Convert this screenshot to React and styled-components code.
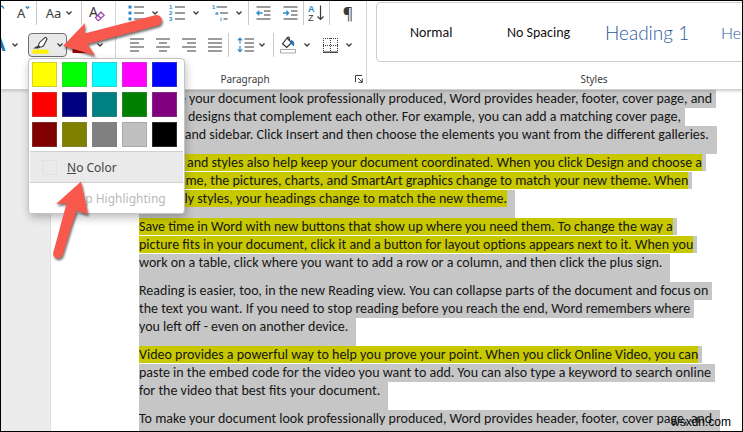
import React, { useState } from "react";
import styled, { createGlobalStyle } from "styled-components";

const GlobalStyle = createGlobalStyle`
  * {
    box-sizing: border-box;
  }
  body {
    margin: 0;
    background: #fff;
    font-family: "Noto Sans", sans-serif;
  }
  button {
    font: inherit;
    color: inherit;
    border: 0;
    padding: 0;
    background: none;
    cursor: pointer;
  }
  svg {
    display: block;
    flex: none;
  }
`;

const Window = styled.div`
  position: relative;
  display: flex;
  flex-direction: column;
  height: 100vh;
  border: 1px solid #000;
  overflow: hidden;
  background: #fff;
`;

const Ribbon = styled.header`
  position: relative;
  z-index: 2;
  display: flex;
  flex: none;
  background: #fff;
  border-bottom: 1px solid #d0d0d0;
  box-shadow: 0 1px 3px rgba(0, 0, 0, 0.2);
`;

const Group = styled.section`
  display: flex;
  flex: none;
  flex-direction: column;
  padding-left: ${(props) => props.$inset || 0}px;
`;

const GroupDivider = styled.div`
  flex: none;
  width: 1px;
  margin-bottom: 5px;
  background: #d2d2d2;
`;

const ToolRow = styled.div`
  display: flex;
  height: 24px;
  margin-bottom: ${(props) => (props.$last ? 0 : 8)}px;
`;

const Tool = styled.button`
  display: flex;
  flex: none;
  align-items: center;
  justify-content: ${(props) => props.$align || "center"};
  gap: ${(props) => props.$gap || 8}px;
  width: ${(props) => props.$width}px;
`;

const Divider = styled.div`
  flex: none;
  width: 1px;
  background: #c9c9c9;
`;

const HighlightAnchor = styled.div`
  position: relative;
  margin: 0 5px 0 4px;
`;

const HighlightButton = styled.button`
  display: flex;
  align-items: center;
  justify-content: center;
  gap: 8px;
  width: 39px;
  height: 24px;
  border: 1px solid #6f6f6f;
  border-radius: 4px;
  background: #e9e9e9;
`;

const GroupFooter = styled.div`
  display: flex;
  align-items: center;
  justify-content: center;
  position: relative;
  height: 20px;
  margin-top: ${(props) => props.$top}px;
  font-size: 10px;
  color: #3b3b3b;
`;

const Launcher = styled.button`
  position: absolute;
  right: 3px;
`;

const StylesGroup = styled.section`
  flex: 1 0 444px;
  padding: 1px 0 0 9px;
`;

const Gallery = styled.div`
  display: flex;
  align-items: center;
  height: 60px;
  padding-left: 33px;
  border: 1px solid #cfcfcf;
  border-radius: 4px;
  overflow: hidden;
`;

const StyleItem = styled.button`
  flex: none;
  width: ${(props) => props.$width}px;
  text-align: left;
  white-space: nowrap;
  font-family: ${(props) => (props.$heading ? "Lato" : "Carlito, Lato")}, sans-serif;
  font-weight: ${(props) => (props.$heading ? 300 : 400)};
  font-size: ${(props) => props.$size}px;
  color: ${(props) => (props.$heading ? "#2f5a9e" : "#111")};
`;

const Menu = styled.div`
  position: absolute;
  top: 25px;
  left: 0;
  width: 157px;
  padding: 3px 1px 0;
  border: 1px solid #c4c4c4;
  border-radius: 4px;
  background: #fff;
  box-shadow: 1px 4px 9px rgba(0, 0, 0, 0.25);
`;

const Swatches = styled.div`
  display: grid;
  grid-template-columns: repeat(5, 25px);
  gap: 5px;
  padding: 0 2px 4px;
`;

const Swatch = styled.button`
  height: 25px;
  border: 1px solid rgba(128, 128, 128, 0.35);
  background: ${(props) => props.$color};
`;

const MenuItem = styled.button`
  display: flex;
  align-items: center;
  gap: 10px;
  width: 100%;
  height: 31px;
  padding-left: 12px;
  border-top: 1px solid #cfcfcf;
  background: ${(props) => (props.$hover ? "#eaeaea" : "#fff")};
  font-size: 12px;
  color: #444;

  &:disabled {
    color: #b9b9b9;
  }
`;

const MenuIcon = styled.span`
  width: 15px;
  height: 15px;
  border: 1px solid ${(props) => (props.$empty ? "transparent" : "#e2e2e2")};
`;

const Workspace = styled.main`
  display: flex;
  flex: 1;
  min-height: 0;
  background: #ececec;
`;

const Sheet = styled.article`
  flex: 1;
  margin-left: 49px;
  padding-left: 88px;
  border-left: 1px solid #e0e0e0;
  background: #fff;
  font-family: Carlito, Lato, sans-serif;
  font-size: 14px;
  line-height: 18px;
  color: #161616;
`;

const Paragraph = styled.p`
  margin: 0;
`;

const Line = styled.span`
  display: block;
  width: fit-content;
  padding-right: 4px;
  background: #c6c6c6;
  white-space: nowrap;

  &:last-child {
    padding-right: 8px;
    padding-bottom: 10px;
  }
`;

const Marked = styled.mark`
  display: block;
  height: 17px;
  margin-bottom: 1px;
  background: #c8c800;
  color: inherit;
`;

const Arrow = styled.svg`
  position: absolute;
  z-index: 3;
  left: ${(props) => props.$left}px;
  top: ${(props) => props.$top}px;
  pointer-events: none;
  filter: drop-shadow(1px 2px 1px rgba(0, 0, 0, 0.55));
`;

const Watermark = styled.div`
  position: absolute;
  right: 11px;
  bottom: 2px;
  font-family: "Liberation Sans", sans-serif;
  font-size: 12px;
  line-height: 14px;
  color: #000;
`;

const colors = [
  ["Yellow", "#ffff00"],
  ["Bright Green", "#00ff00"],
  ["Turquoise", "#00ffff"],
  ["Pink", "#ff00ff"],
  ["Blue", "#0000ff"],
  ["Red", "#ff0000"],
  ["Dark Blue", "#000080"],
  ["Teal", "#008080"],
  ["Green", "#008000"],
  ["Violet", "#800080"],
  ["Dark Red", "#800000"],
  ["Dark Yellow", "#808000"],
  ["Gray 50%", "#808080"],
  ["Gray 25%", "#c0c0c0"],
  ["Black", "#000000"],
];

// marked = how many lines at the start of the paragraph are highlighted
const paragraphs = [
  {
    marked: 0,
    lines: [
      "To make your document look professionally produced, Word provides header, footer, cover page, and",
      "text box designs that complement each other. For example, you can add a matching cover page,",
      "header, and sidebar. Click Insert and then choose the elements you want from the different galleries.",
    ],
  },
  {
    marked: 3,
    lines: [
      "Themes and styles also help keep your document coordinated. When you click Design and choose a",
      "new theme, the pictures, charts, and SmartArt graphics change to match your new theme. When",
      "you apply styles, your headings change to match the new theme.",
    ],
  },
  {
    marked: 2,
    lines: [
      "Save time in Word with new buttons that show up where you need them. To change the way a",
      "picture fits in your document, click it and a button for layout options appears next to it. When you",
      "work on a table, click where you want to add a row or a column, and then click the plus sign.",
    ],
  },
  {
    marked: 0,
    lines: [
      "Reading is easier, too, in the new Reading view. You can collapse parts of the document and focus on",
      "the text you want. If you need to stop reading before you reach the end, Word remembers where",
      "you left off - even on another device.",
    ],
  },
  {
    marked: 1,
    lines: [
      "Video provides a powerful way to help you prove your point. When you click Online Video, you can",
      "paste in the embed code for the video you want to add. You can also type a keyword to search online",
      "for the video that best fits your document.",
    ],
  },
  {
    marked: 0,
    lines: [
      "To make your document look professionally produced, Word provides header, footer, cover page, and",
    ],
  },
];

const INK = "#3a3a3a";
const BLUE = "#2b88c8";

const IconText = styled.text`
  font-family: ${(props) => (props.$ui ? "Noto Sans" : "Liberation Sans")}, sans-serif;
  font-size: ${(props) => props.$size || 6}px;
  font-weight: ${(props) => (props.$thin ? 400 : 700)};
  fill: ${(props) => props.$color || BLUE};
`;

const Chevron = () => (
  <svg width="6" height="4" viewBox="0 0 6 4" fill="none" stroke={INK} strokeWidth="1.3">
    <path d="M0.5 0.5 3 3 5.5 0.5" />
  </svg>
);

const ShrinkFontIcon = () => (
  <svg width="15" height="18" viewBox="0 0 15 18" fill="none">
    <IconText x="1" y="14" $size={13} $ui $thin $color={INK}>A</IconText>
    <path d="M9.8 2.5 11.5 4.3 13.2 2.5" stroke={BLUE} strokeWidth="1.3" />
  </svg>
);

const GrowFontIcon = () => (
  <svg width="6" height="16" viewBox="0 0 6 16" fill="none">
    <path d="M-1 2.5 1 1 3 3.5" stroke={BLUE} strokeWidth="1.3" />
  </svg>
);

const ClearFormatIcon = () => (
  <svg width="18" height="20" viewBox="0 0 18 20" fill="none">
    <IconText x="1" y="14" $size={14} $ui $thin $color={INK}>A</IconText>
    <path d="m7.5 14.5 5.5-5.3 3.2 3-5.5 5.3H9.8z" fill="#fff" stroke="#9b3fae" strokeWidth="1.2" />
    <path d="m9.8 12.3 3.2 3" stroke="#9b3fae" strokeWidth="1.2" />
  </svg>
);

const TextEffectsIcon = () => (
  <svg width="6" height="20" viewBox="0 0 6 20" fill="none">
    <IconText x="-8" y="16" $size={18} $ui $color="#2473b5">A</IconText>
  </svg>
);

const HighlighterIcon = () => (
  <svg width="17" height="19" viewBox="0 0 17 19" fill="none">
    <path d="M13.2 1.3 7.3 6.7l-.8 3.2 1.6 1.3 3.1-.9 3.8-7.2q-.2-1.6-1.8-1.8zM6.6 9.6 3 12h3.4l1.4-.9" fill="#fff" stroke={INK} strokeWidth="1.1" />
    <path d="M2.5 12h3.8l1.3-1-1.2-1.3z" fill={INK} />
    <path d="M0.5 13.7h16v4h-16z" fill="#fff000" />
  </svg>
);

const FontColorIcon = () => (
  <svg width="17" height="18" viewBox="0 0 17 18" fill="none">
    <IconText x="4" y="11" $size={13} $ui $thin $color={INK}>A</IconText>
    <path d="M0.5 13h16v4h-16z" fill="#c00000" />
  </svg>
);

const BulletsIcon = () => (
  <svg width="16" height="16" viewBox="0 0 16 16" fill="none">
    <path d="M0.5 0.5h3v3h-3zM0.5 6.5h3v3h-3zM0.5 12.5h3v3h-3z" fill={BLUE} />
    <path d="M6 2h10M6 8h10M6 14h10" stroke={INK} strokeWidth="1.2" />
  </svg>
);

const NumberingIcon = () => (
  <svg width="16" height="20" viewBox="0 0 16 20" fill="none">
    <IconText x="0" y="6">1</IconText>
    <IconText x="0" y="12">2</IconText>
    <IconText x="0" y="18">3</IconText>
    <path d="M6 4h10M6 10h10M6 16h10" stroke={INK} strokeWidth="1.2" />
  </svg>
);

const MultilevelIcon = () => (
  <svg width="16" height="20" viewBox="0 0 16 20" fill="none">
    <IconText x="0" y="6">1</IconText>
    <IconText x="3" y="12">a</IconText>
    <IconText x="8" y="18">i</IconText>
    <path d="M4.5 4H15M8 10h8M11.5 16h4" stroke={INK} strokeWidth="1.2" />
  </svg>
);

const IndentIcon = ({ outdent }) => (
  <svg width="15" height="14" viewBox="0 0 15 14" fill="none">
    <path d="M0.5 1h14M8 5h6.5M8 9h6.5M0.5 13h14" stroke={INK} strokeWidth="1.2" />
    <path d={outdent ? "M6.5 7H1M3.3 4.6 0.9 7l2.4 2.4" : "M0 7h5.5M3.3 4.6 5.7 7 3.3 9.4"} stroke={BLUE} strokeWidth="1.3" />
  </svg>
);

const SortIcon = () => (
  <svg width="17" height="20" viewBox="0 0 17 20" fill="none">
    <IconText x="0" y="9" $size={9}>A</IconText>
    <IconText x="0" y="18" $size={9} $thin $color={INK}>Z</IconText>
    <path d="M12.5 2.5v14M9.5 13.5l3 3 3-3" stroke={INK} strokeWidth="1.2" />
  </svg>
);

const alignLines = {
  left: "M0 1h14M0 5h9M0 9h14M0 13h9",
  center: "M0 1h14M3 5h8M0 9h14M3 13h8",
  right: "M0 1h14M5 5h9M0 9h14M5 13h9",
  justify: "M0 1h14M0 5h14M0 9h14M0 13h14",
};

const AlignIcon = ({ kind }) => (
  <svg width="14" height="14" viewBox="0 0 14 14" fill="none">
    <path d={alignLines[kind]} stroke={INK} strokeWidth="1.2" />
  </svg>
);

const SpacingIcon = () => (
  <svg width="17" height="16" viewBox="0 0 17 16" fill="none">
    <path d="M3 1v5.5M3 9v5.5M0.8 3.4 3 1.2l2.2 2.2M0.8 12.4 3 14.6l2.2-2.2" stroke={BLUE} strokeWidth="1.2" />
    <path d="M7.5 2H17M7.5 6H17M7.5 10H17M7.5 14H17" stroke={INK} strokeWidth="1.2" />
  </svg>
);

const ShadingIcon = () => (
  <svg width="16" height="18" viewBox="0 0 16 18" fill="none">
    <path d="M7 2 2.5 7.8l4.3 3.7 4.6-4.8zM7 2q1.6-1.8 2.3 0l.4 3" stroke={INK} strokeWidth="1.2" />
    <path d="M11 4.5q3.5.3 2.5 5.5-1-2.5-2.5-2.5z" fill="#2473b5" stroke="#2473b5" />
    <path d="M0.5 13.5h15v3.5h-15z" stroke="#aaa" fill="#fff" />
  </svg>
);

const BordersIcon = () => (
  <svg width="15" height="15" viewBox="0 0 15 15" fill="none" stroke={INK}>
    <path d="M0 0.5h15M0 7.5h15M0.5 0V13M7.5 0V13M14.5 0V13" strokeDasharray="1 1" />
    <path d="M0 14.2h15" strokeWidth="1.4" />
  </svg>
);

const LauncherIcon = () => (
  <svg width="8" height="8" viewBox="0 0 8 8" fill="none" stroke={INK}>
    <path d="M0.5 7V0.5H7M3 3l4 4M7.3 3.5v3.8H3.5" />
  </svg>
);

const Glyphs = styled.span`
  font-size: ${(props) => props.$size || 13}px;
  line-height: 20px;
  color: ${INK};
`;

function HighlightMenu({ onPick }) {
  return (
    <Menu role="menu">
      <Swatches>
        {colors.map(([name, color]) => (
          <Swatch key={name} $color={color} aria-label={name} onClick={() => onPick(name)} />
        ))}
      </Swatches>
      <MenuItem $hover role="menuitem" onClick={() => onPick("none")}>
        <MenuIcon />
        <span><u>N</u>o Color</span>
      </MenuItem>
      <MenuItem role="menuitem" disabled>
        <MenuIcon $empty />
        <span>Stop Highlighting</span>
      </MenuItem>
    </Menu>
  );
}

function FontGroup() {
  const [open, setOpen] = useState(true);

  return (
    <Group>
      <ToolRow>
        <Tool $width={9} $align="flex-start" aria-label="Increase font size"><GrowFontIcon /></Tool>
        <Tool $width={26} aria-label="Decrease font size"><ShrinkFontIcon /></Tool>
        <Divider />
        <Tool $width={44} $gap={5} aria-label="Change case"><Glyphs>Aa</Glyphs><Chevron /></Tool>
        <Divider />
        <Tool $width={30} aria-label="Clear formatting"><ClearFormatIcon /></Tool>
      </ToolRow>
      <ToolRow $last>
        <Tool $width={23} $gap={5} $align="flex-start" aria-label="Text effects"><TextEffectsIcon /><Chevron /></Tool>
        <HighlightAnchor>
          <HighlightButton aria-label="Text highlight color" onClick={() => setOpen(!open)}>
            <HighlighterIcon />
            <Chevron />
          </HighlightButton>
          {open && <HighlightMenu onPick={() => setOpen(false)} />}
        </HighlightAnchor>
        <Tool $width={43} $align="flex-start" aria-label="Font color"><FontColorIcon /><Chevron /></Tool>
      </ToolRow>
    </Group>
  );
}

function ParagraphGroup() {
  return (
    <Group $inset={8}>
      <ToolRow>
        <Tool $width={38} aria-label="Bullets"><BulletsIcon /><Chevron /></Tool>
        <Tool $width={44} aria-label="Numbering"><NumberingIcon /><Chevron /></Tool>
        <Tool $width={42} aria-label="Multilevel list"><MultilevelIcon /><Chevron /></Tool>
        <Divider />
        <Tool $width={28} aria-label="Decrease indent"><IndentIcon outdent /></Tool>
        <Tool $width={26} aria-label="Increase indent"><IndentIcon /></Tool>
        <Divider />
        <Tool $width={25} aria-label="Sort"><SortIcon /></Tool>
        <Divider />
        <Tool $width={36} aria-label="Show paragraph marks"><Glyphs $size={16}>¶</Glyphs></Tool>
      </ToolRow>
      <ToolRow $last>
        <Tool $width={26} aria-label="Align left"><AlignIcon kind="left" /></Tool>
        <Tool $width={26} aria-label="Center"><AlignIcon kind="center" /></Tool>
        <Tool $width={26} aria-label="Align right"><AlignIcon kind="right" /></Tool>
        <Tool $width={26} aria-label="Justify"><AlignIcon kind="justify" /></Tool>
        <Divider />
        <Tool $width={44} $gap={5} aria-label="Line spacing"><SpacingIcon /><Chevron /></Tool>
        <Divider />
        <Tool $width={42} aria-label="Shading"><ShadingIcon /><Chevron /></Tool>
        <Tool $width={42} aria-label="Borders"><BordersIcon /><Chevron /></Tool>
      </ToolRow>
      <GroupFooter $top={12}>
        Paragraph
        <Launcher aria-label="Paragraph settings"><LauncherIcon /></Launcher>
      </GroupFooter>
    </Group>
  );
}

export default function App() {
  return (
    <Window>
      <GlobalStyle />
      <Ribbon>
        <FontGroup />
        <GroupDivider />
        <ParagraphGroup />
        <GroupDivider />
        <StylesGroup>
          <Gallery>
            <StyleItem $width={97} $size={14}>Normal</StyleItem>
            <StyleItem $width={98} $size={14}>No Spacing</StyleItem>
            <StyleItem $width={116} $size={19} $heading>Heading 1</StyleItem>
            <StyleItem $width={90} $size={16} $heading>Heading 2</StyleItem>
          </Gallery>
          <GroupFooter $top={7}>Styles</GroupFooter>
        </StylesGroup>
      </Ribbon>
      <Workspace>
        <Sheet>
          {paragraphs.map((paragraph, p) => (
            <Paragraph key={p}>
              {paragraph.lines.map((line, i) => (
                <Line key={line}>{i < paragraph.marked ? <Marked>{line}</Marked> : line}</Line>
              ))}
            </Paragraph>
          ))}
        </Sheet>
      </Workspace>
      <Arrow $left={61} $top={12} width="103" height="48" viewBox="62 13 103 48">
        <path d="M63 46 85 23 84.5 33.5 155 15.2Q160 14.5 161.8 19 162.3 24 158 25.5L87.5 44 95 55.5Z" fill="#f9594c" />
      </Arrow>
      <Arrow $left={50} $top={179} width="42" height="82" viewBox="51 180 42 82">
        <path d="M81 181.5 56 204 66.5 203.5 53.2 253Q53 257.5 57 258.3 61 258.5 62.5 255.5L76.5 210.5 88 214.5Z" fill="#f9594c" />
      </Arrow>
      <Watermark>wsxdn.com</Watermark>
    </Window>
  );
}
